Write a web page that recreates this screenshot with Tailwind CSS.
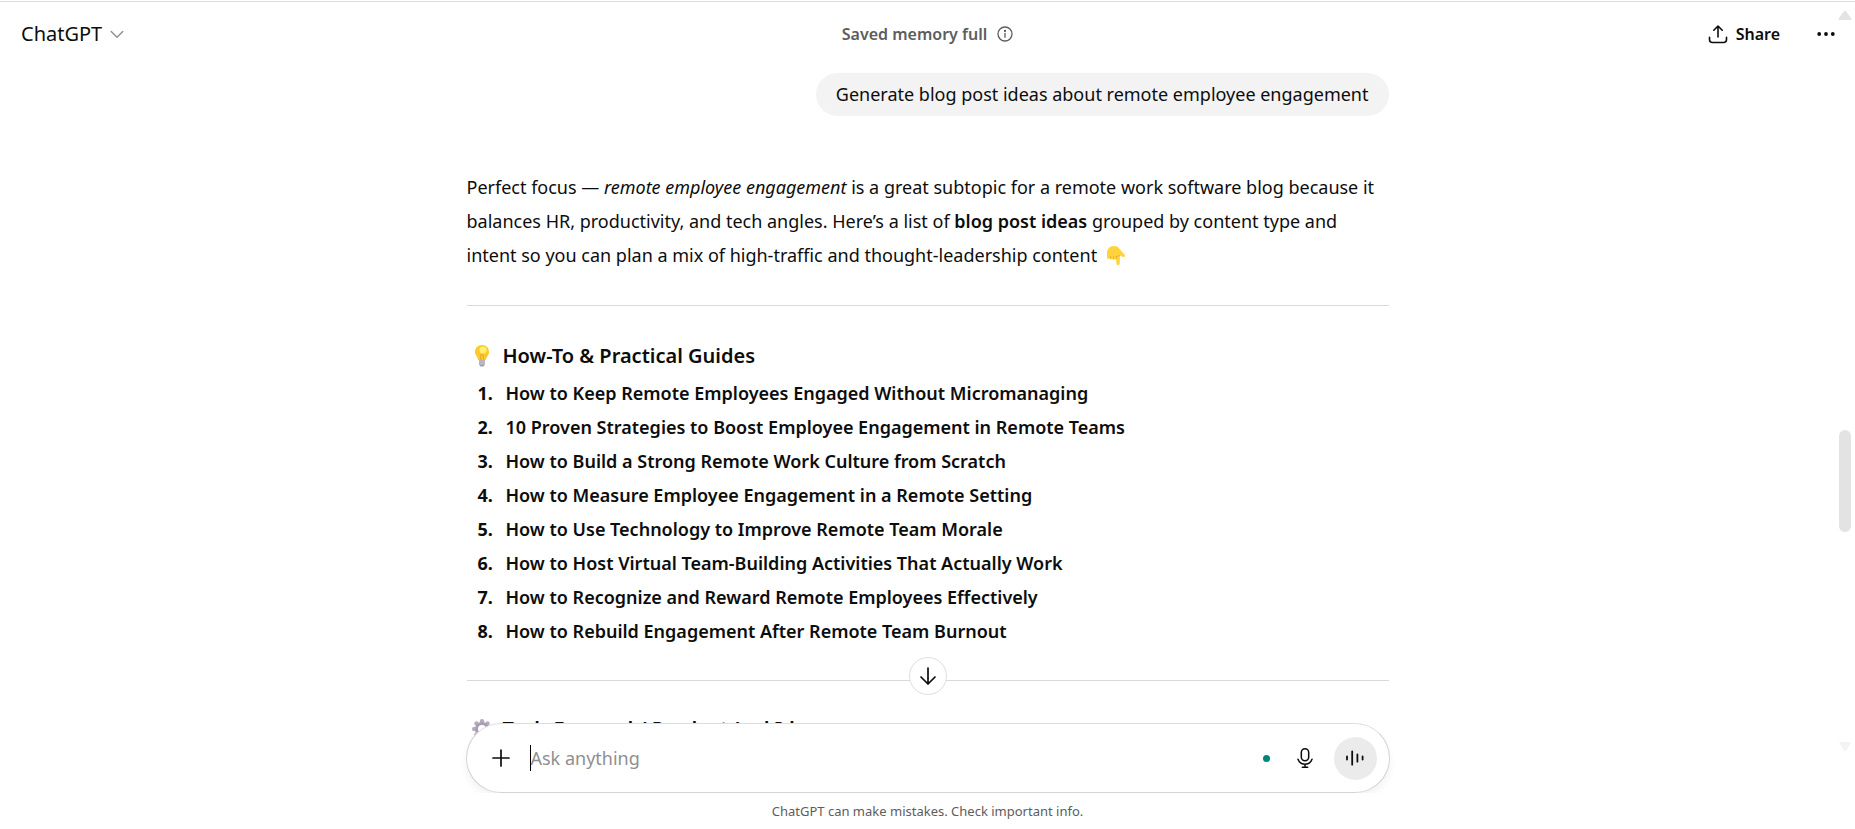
<!DOCTYPE html>
<html lang="en">
<head>
<meta charset="utf-8">
<meta name="viewport" content="width=device-width, initial-scale=1">
<title>ChatGPT</title>
<script src="https://cdn.jsdelivr.net/npm/@tailwindcss/browser@4"></script>
</head>
<body class="relative flex h-screen flex-col overflow-hidden bg-white pt-px font-['Segoe_UI','Noto_Sans',sans-serif] text-lg text-[#0d0d0d]">

<header class="flex h-[64px] shrink-0 items-center justify-between border-t border-[#dedede] px-[15px]">
  <div class="flex flex-1">
    <button class="flex items-center gap-2 pl-[6px] text-xl">ChatGPT
      <svg class="size-[14px] text-[#8f8f8f]" viewBox="0 0 14 14" fill="none" stroke="currentColor" stroke-width="1.4" stroke-linecap="round" stroke-linejoin="round"><path d="M1.2 4.4 7 10.2l5.800-5.800"/></svg>
    </button>
  </div>
  <button class="flex items-center gap-[10px] text-base font-semibold text-[#5d5d5d]">Saved memory full
    <svg class="size-4" viewBox="0 0 16 16" fill="none" stroke="currentColor" stroke-width="1.300" stroke-linecap="round"><circle cx="8" cy="8" r="7"/><path d="M8 7.500v3.800"/><circle cx="8" cy="4.900" r=".5" fill="currentColor"/></svg>
  </button>
  <div class="flex flex-1 items-center justify-end gap-8">
    <button class="flex items-center gap-2 text-base font-semibold">
      <svg class="size-5" viewBox="0 0 20 20" fill="none" stroke="currentColor" stroke-width="1.600" stroke-linecap="round" stroke-linejoin="round"><path d="M10 13V2M5.800 6.200 10 2l4.200 4.200M1.500 13.200v2.300a3 3 0 0 0 3 3h11a3 3 0 0 0 3-3v-2.300"/></svg>
      Share
    </button>
    <button aria-label="More options" class="p-1">
      <svg class="size-5" viewBox="0 0 20 20" fill="currentColor"><circle cx="3.200" cy="10" r="1.900"/><circle cx="10" cy="10" r="1.900"/><circle cx="16.800" cy="10" r="1.900"/></svg>
    </button>
  </div>
</header>

<main class="min-h-0 flex-1 overflow-hidden">
  <div class="mx-auto flex max-w-[922px] flex-col pt-2">
    <p class="self-end rounded-full bg-[#f3f3f3] px-5 py-2 leading-[27px]">Generate blog post ideas about remote employee engagement</p>
    <article>
      <p class="mt-[54px] leading-[34px]">Perfect focus — <em>remote employee engagement</em> is a great subtopic for a remote work software blog because it<br>balances HR, productivity, and tech angles. Here’s a list of <strong class="font-semibold">blog post ideas</strong> grouped by content type and<br>intent so you can plan a mix of high-traffic and thought-leadership content
        <svg class="ml-1 inline size-5 align-[-3px]" role="img" aria-label="Pointing down" viewBox="0 0 20 20"><path fill="#ffd43b" d="M1 8.500C1 4 3.500 1 8 1c3 0 4.500 1 5.500 3l5 5.500c1.200 1.500 0 3-1.500 2.500l-3-1.500-.3 8c0 2.200-3.300 2.200-3.300 0l-.2-4.500c-.8.8-2 .7-2.700 0-.8.7-2.100.6-2.800-.2C2.500 14.300 1 13.500 1 12z"/><path fill="none" stroke="#e5a52c" stroke-width=".7" stroke-linecap="round" d="M4.600 11.500v2M7.500 11.800v2.100M10.300 11.500v2.500M10.300 11.500l3.500-1"/></svg>
      </p>
      <hr class="mt-[33px] border-[#d9d9d9]">
      <h3 class="mt-[35px] flex items-center gap-[11px] pl-[5px] text-xl leading-[30px] font-semibold">
        <svg class="h-[22px] w-5" role="img" aria-label="Light bulb" viewBox="0 0 20 22"><path fill="#ffc928" d="M10 0C5.800 0 3 3 3 6.900c0 3.200 2.500 4.600 3.200 8.100h7.600c.7-3.500 3.200-4.900 3.200-8.100C17 3 14.200 0 10 0z"/><circle cx="11" cy="5" r="3.600" fill="#ffef72"/><path fill="none" stroke="#ef9f2d" stroke-width=".9" d="M8.700 15V9.800h2.600V15"/><path fill="#9b9da3" d="M7 15.300h6v4.200l-1.500 2h-3L7 19.500z"/><path stroke="#d2d3d7" d="M7 17h6M7 19h6"/></svg>
        How-To &amp; Practical Guides
      </h3>
      <ol class="mt-[5px] list-decimal pl-[31px] leading-[34px] font-semibold marker:font-bold">
        <li class="pl-[8px]">How to Keep Remote Employees Engaged Without Micromanaging</li>
        <li class="pl-[8px]">10 Proven Strategies to Boost Employee Engagement in Remote Teams</li>
        <li class="pl-[8px]">How to Build a Strong Remote Work Culture from Scratch</li>
        <li class="pl-[8px]">How to Measure Employee Engagement in a Remote Setting</li>
        <li class="pl-[8px]">How to Use Technology to Improve Remote Team Morale</li>
        <li class="pl-[8px]">How to Host Virtual Team-Building Activities That Actually Work</li>
        <li class="pl-[8px]">How to Recognize and Reward Remote Employees Effectively</li>
        <li class="pl-[8px]">How to Rebuild Engagement After Remote Team Burnout</li>
      </ol>
      <hr class="mt-8 border-[#d9d9d9]">
      <h3 class="mt-[33px] flex items-center gap-[11px] pl-[5px] text-xl leading-[30px] font-semibold">
        <svg class="size-5" role="img" aria-label="Gear" viewBox="0 0 20 20"><g fill="#b5abc0"><circle cx="10" cy="2.200" r="2.200"/><circle cx="4.500" cy="4.500" r="2.200"/><circle cx="15.500" cy="4.500" r="2.200"/><circle cx="2.200" cy="10" r="2.200"/><circle cx="17.800" cy="10" r="2.200"/><circle cx="4.500" cy="15.500" r="2.200"/><circle cx="15.500" cy="15.500" r="2.200"/><circle cx="10" cy="17.800" r="2.200"/></g><circle cx="10" cy="10" r="5.500" fill="none" stroke="#a99db3" stroke-width="3"/></svg>
        Tech-Focused / Product-Led Ideas
      </h3>
    </article>
  </div>
</main>

<footer class="relative z-10 -mt-10 shrink-0">
  <button aria-label="Scroll to bottom" class="absolute -top-[66px] left-1/2 flex size-[38px] -translate-x-1/2 items-center justify-center rounded-full border border-[#dedede] bg-white">
    <svg class="size-5" viewBox="0 0 20 20" fill="none" stroke="currentColor" stroke-width="1.700" stroke-linecap="round" stroke-linejoin="round"><path d="M10 2v16M3 11l7 7 7-7"/></svg>
  </button>
  <form class="mx-auto flex h-[70px] max-w-[924px] items-center rounded-full border border-[#d4d4d4] border-t-[#dedede] bg-white pr-3 pl-[23px] shadow-[0_5px_8px_rgba(0,0,0,0.05)]">
    <button type="button" aria-label="Add files" class="mr-[18px]">
      <svg class="size-[22px]" viewBox="0 0 22 22" fill="none" stroke="currentColor" stroke-width="1.700" stroke-linecap="round"><path d="M11 3v16M3 11h16"/></svg>
    </button>
    <span aria-hidden="true" class="h-[26px] w-px bg-black"></span>
    <input type="text" aria-label="Message" placeholder="Ask anything" class="min-w-0 flex-1 outline-none placeholder:text-[#8f8f8f]">
    <span class="mr-6 size-[7px] rounded-full bg-[#008578]"></span>
    <button type="button" aria-label="Dictate" class="mr-[18px]">
      <svg class="h-6 w-[22px]" viewBox="0 0 22 24" fill="none" stroke="currentColor" stroke-width="1.500" stroke-linecap="round"><rect x="7.300" y="2.700" width="7.400" height="12" rx="3.700"/><path d="M4 13.200c1.100 3.300 3.700 5 7 5s5.900-1.700 7-5M11 18.200v3M8.300 21.300h5.400"/></svg>
    </button>
    <button type="button" aria-label="Use voice mode" class="flex size-[43px] items-center justify-center rounded-full bg-[#ebebeb]">
      <svg class="size-5" viewBox="0 0 20 20" stroke="currentColor" stroke-width="1.800" stroke-linecap="round"><path d="M2 8.400v3.200M7.200 3.300v13.400M12.400 6.300v7.400M17.600 8.400v3.200"/></svg>
    </button>
  </form>
  <p class="bg-white pt-[9px] pb-[9px] text-center text-[13px] leading-[18px] text-[#5d5d5d]">ChatGPT can make mistakes. Check important info.</p>
</footer>

<div aria-hidden="true" class="absolute top-[10px] right-[3px] flex h-[742px] w-[14px] flex-col items-center">
  <svg class="h-[10px] w-[14px]" viewBox="0 0 14 10" fill="#e3e3e3" stroke="#e3e3e3" stroke-width="2" stroke-linejoin="round"><path d="M7 1.500 1.500 9h11z"/></svg>
  <div class="mt-[410px] h-[102px] w-3 rounded-full bg-[#e3e3e3]"></div>
  <svg class="mt-auto h-[10px] w-3" viewBox="0 0 12 10" fill="#f3f3f3"><path d="M0 0h12L7 9H5z"/></svg>
</div>
</body>
</html>
